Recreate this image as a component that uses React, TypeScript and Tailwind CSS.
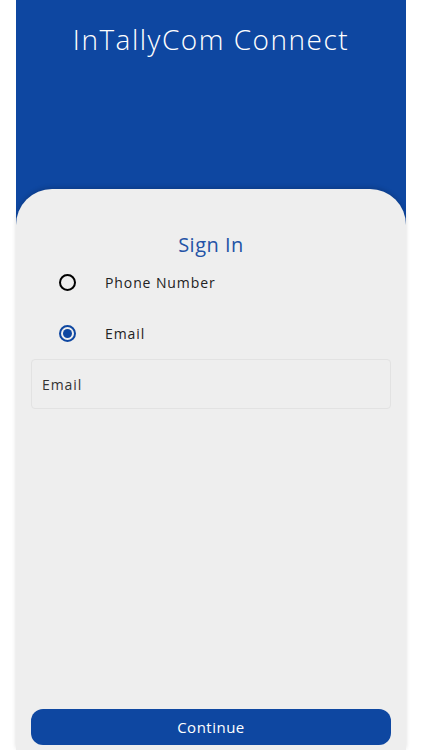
import { useState } from "react";

export default function App() {
  const [mode, setMode] = useState<"phone" | "email">("email");

  return (
    <div
      className="w-[422px] h-[750px] bg-white flex overflow-hidden pl-[16px]"
      style={{ fontFamily: '"Open Sans", sans-serif' }}
    >
      <div className="w-[390px] h-full bg-[#0e47a1] flex flex-col">
        <div className="h-[189px] shrink-0 flex justify-center pt-[21px]">
          <h1 className="text-[28px] leading-[36px] font-light text-white tracking-[1.5px]">
            InTallyCom Connect
          </h1>
        </div>
        <div className="flex-1 bg-[#eeeeee] rounded-t-[36px] shadow-[0_-2px_4px_rgba(0,0,0,0.15)] flex flex-col px-[15px] pt-[44px] pb-[5px]">
          <h2 className="text-center text-[20px] leading-[24px] text-[#2453a6] tracking-[0.5px]">
            Sign In
          </h2>
          <div className="flex flex-col mt-[12px]">
            <button
              onClick={() => setMode("phone")}
              className="h-[26px] flex items-center gap-[29px] pl-[28px]"
            >
              <span
                className={
                  mode === "phone"
                    ? "w-[17px] h-[17px] rounded-full border-2 border-[#0e47a1] flex items-center justify-center"
                    : "w-[17px] h-[17px] rounded-full border-2 border-black flex items-center justify-center"
                }
              >
                {mode === "phone" && (
                  <span className="w-[9px] h-[9px] rounded-full bg-[#0e47a1]" />
                )}
              </span>
              <span className="text-[14px] text-[#222] tracking-[0.9px]">
                Phone Number
              </span>
            </button>
            <button
              onClick={() => setMode("email")}
              className="h-[26px] mt-[25px] flex items-center gap-[29px] pl-[28px]"
            >
              <span
                className={
                  mode === "email"
                    ? "w-[17px] h-[17px] rounded-full border-2 border-[#0e47a1] flex items-center justify-center"
                    : "w-[17px] h-[17px] rounded-full border-2 border-black flex items-center justify-center"
                }
              >
                {mode === "email" && (
                  <span className="w-[9px] h-[9px] rounded-full bg-[#0e47a1]" />
                )}
              </span>
              <span className="text-[14px] text-[#222] tracking-[0.9px]">
                Email
              </span>
            </button>
          </div>
          <input
            className="mt-[13px] h-[50px] w-full rounded-[4px] border border-[#e2e2e2] bg-transparent px-[10px] text-[14px] tracking-[0.9px] text-[#222] placeholder:text-[#333] outline-none"
            placeholder={mode === "email" ? "Email" : "Phone Number"}
          />
          <div className="flex-1" />
          <button className="h-[36px] w-full rounded-[12px] bg-[#0e47a1] text-white text-[15px] tracking-[0.5px]">
            Continue
          </button>
        </div>
      </div>
    </div>
  );
}
